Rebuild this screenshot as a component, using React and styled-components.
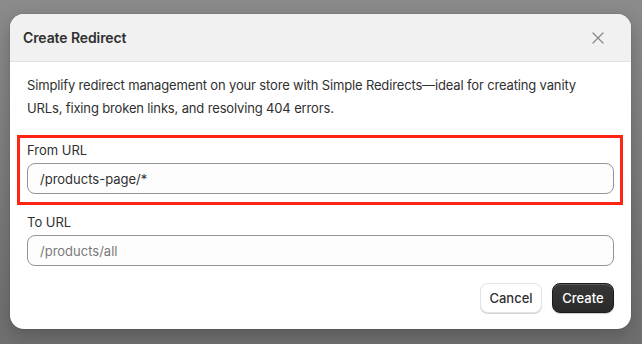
import React from "react";
import styled, { createGlobalStyle } from "styled-components";

const Global = createGlobalStyle`
  html, body { margin: 0; padding: 0; }
  body {
    width: 642px;
    height: 344px;
    overflow: hidden;
    font-family: Inter, "Noto Sans", "Liberation Sans", sans-serif;
    -webkit-font-smoothing: antialiased;
  }
`;

const Backdrop = styled.div`
  width: 642px;
  height: 344px;
  box-sizing: border-box;
  padding: 14px 11px 0 10px;
  background: linear-gradient(180deg, #8b8b8b 0%, #7d7d7d 50%, #6f6f6f 100%);
`;

const Modal = styled.div`
  width: 621px;
  background: #ffffff;
  border-radius: 14px;
  overflow: hidden;
  box-shadow: 0 6px 18px rgba(0, 0, 0, 0.22), 0 0 0 1px rgba(0, 0, 0, 0.04);
  display: flex;
  flex-direction: column;
`;

const Header = styled.div`
  height: 48px;
  box-sizing: border-box;
  background: #f1f1f1;
  border-bottom: 1px solid #e3e3e3;
  display: flex;
  align-items: center;
  justify-content: space-between;
  padding: 0 26px 0 13px;
`;

const Title = styled.h2`
  margin: 0;
  font-size: 14px;
  font-weight: 600;
  color: #303030;
  letter-spacing: -0.1px;
`;

const CloseButton = styled.button`
  border: none;
  background: transparent;
  padding: 0;
  width: 14px;
  height: 14px;
  display: flex;
  align-items: center;
  justify-content: center;
  color: #8a8a8a;
  cursor: pointer;
`;

const Body = styled.div`
  padding: 12px 17px 16px 17px;
  display: flex;
  flex-direction: column;
`;

const Description = styled.p`
  margin: 0;
  font-size: 13px;
  line-height: 23px;
  color: #303030;
  letter-spacing: -0.15px;
`;

const Highlight = styled.div`
  margin: 15px -9px 0 -10px;
  border: 3px solid #ff2414;
  padding: 4px 6px 8px 7px;
`;

const Field = styled.div`
  display: flex;
  flex-direction: column;
  gap: 5px;
  margin-top: ${(p) => p.$top || 0}px;
`;

const Label = styled.label`
  font-size: 13px;
  line-height: 16px;
  color: #303030;
`;

const Input = styled.input`
  height: 31px;
  box-sizing: border-box;
  border: 1px solid #959595;
  border-radius: 8px;
  background: #fdfdfd;
  padding: 0 12px;
  font-family: inherit;
  font-size: 13px;
  color: #303030;
  outline: none;
  &::placeholder {
    color: #7a7a7a;
  }
`;

const Actions = styled.div`
  display: flex;
  justify-content: flex-end;
  gap: 10px;
  margin-top: 17px;
`;

const Button = styled.button`
  height: 30px;
  width: 62px;
  border-radius: 8px;
  font-family: inherit;
  font-size: 13px;
  font-weight: 500;
  cursor: pointer;
  ${(p) =>
    p.$primary
      ? `
    background: linear-gradient(180deg, #383838 0%, #2a2a2a 100%);
    color: #ffffff;
    border: 1px solid #1a1a1a;
    box-shadow: inset 0 1px 0 rgba(255,255,255,0.18), 0 1px 1px rgba(0,0,0,0.2);
  `
      : `
    background: #ffffff;
    color: #303030;
    border: 1px solid #e3e3e3;
    box-shadow: 0 1px 0 #d4d4d4;
  `}
`;

export default function App() {
  return (
    <>
      <Global />
      <Backdrop>
        <Modal>
          <Header>
            <Title>Create Redirect</Title>
            <CloseButton aria-label="Close">
              <svg width="12" height="12" viewBox="0 0 12 12" fill="none">
                <path d="M1 1L11 11M11 1L1 11" stroke="currentColor" strokeWidth="1.3" strokeLinecap="round" />
              </svg>
            </CloseButton>
          </Header>
          <Body>
            <Description>
              Simplify redirect management on your store with Simple Redirects—ideal for creating vanity URLs, fixing broken links, and resolving 404 errors.
            </Description>
            <Highlight>
              <Field>
                <Label>From URL</Label>
                <Input defaultValue="/products-page/*" />
              </Field>
            </Highlight>
            <Field $top={9}>
              <Label>To URL</Label>
              <Input placeholder="/products/all" />
            </Field>
            <Actions>
              <Button>Cancel</Button>
              <Button $primary>Create</Button>
            </Actions>
          </Body>
        </Modal>
      </Backdrop>
    </>
  );
}
